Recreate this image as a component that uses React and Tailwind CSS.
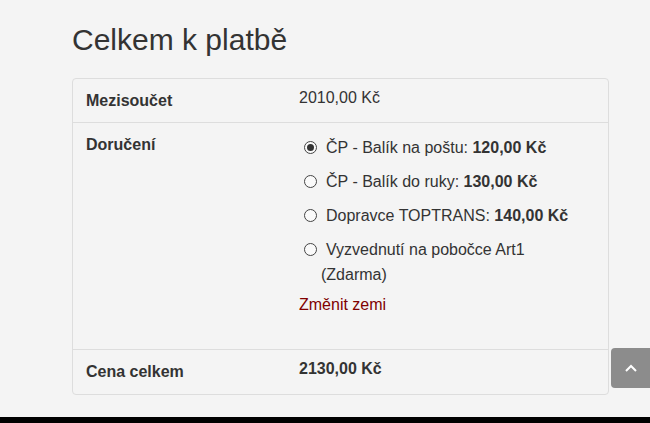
import React from 'react';

const options = [
  { id: 'post', name: 'ČP - Balík na poštu: ', price: '120,00 Kč', checked: true },
  { id: 'hand', name: 'ČP - Balík do ruky: ', price: '130,00 Kč' },
  { id: 'toptrans', name: 'Dopravce TOPTRANS: ', price: '140,00 Kč' },
  { id: 'pickup', name: 'Vyzvednutí na pobočce Art1 (Zdarma)' },
];

function Radio({ checked }) {
  return (
    <span className="absolute left-[5px] top-[6px] flex h-[13px] w-[13px] items-center justify-center rounded-full border border-[#444] bg-[#fafafa]">
      {checked && <span className="h-[7px] w-[7px] rounded-full bg-[#333]" />}
    </span>
  );
}

export default function App() {
  return (
    <div className="relative flex h-screen flex-col overflow-hidden bg-[#f4f4f4] text-[#333] font-['Liberation_Sans',Arial,sans-serif]">
      <div className="ml-[72px] w-[537px]">
        <h1 className="mt-[23px] text-[30px] leading-[33px]">Celkem k platbě</h1>

        <div className="mt-[22px] rounded-[4px] border border-[#ddd] text-[16px] leading-[22px]">
          {/* subtotal */}
          <div className="flex pb-[10px]">
            <div className="w-[226px] pl-[13px] pt-[11px] font-bold">Mezisoučet</div>
            <div className="pt-[8px]">2010,00 Kč</div>
          </div>

          {/* delivery */}
          <div className="flex border-t border-[#ddd] pb-[32px]">
            <div className="w-[226px] pl-[13px] pt-[11px] font-bold">Doručení</div>
            <div className="w-[280px] pt-[12px] leading-[25px]">
              <div className="flex flex-col gap-[9px]">
                {options.map(o => (
                  <label key={o.id} className="relative block pl-[22px] indent-[5px]">
                    <Radio checked={o.checked} />
                    {o.name}
                    {o.price && <b>{o.price}</b>}
                  </label>
                ))}
              </div>
              <a className="mt-[5px] block text-[#800000]">Změnit zemi</a>
            </div>
          </div>

          {/* total */}
          <div className="flex border-t border-[#ddd] pb-[11px]">
            <div className="w-[226px] pl-[13px] pt-[11px] font-bold">Cena celkem</div>
            <div className="pt-[8px] font-bold">2130,00 Kč</div>
          </div>
        </div>
      </div>

      <div className="mt-[22px] flex-1 bg-black" />

      {/* back to top */}
      <div className="absolute left-[611px] top-[348px] flex h-[40px] w-[44px] items-center justify-center rounded-[4px] bg-[#8c8c8c] pr-[5px]">
        <svg width="12" height="8" viewBox="0 0 12 8" fill="none" stroke="#fff" strokeWidth="2">
          <path d="M1 7l5-5 5 5" />
        </svg>
      </div>
    </div>
  );
}
